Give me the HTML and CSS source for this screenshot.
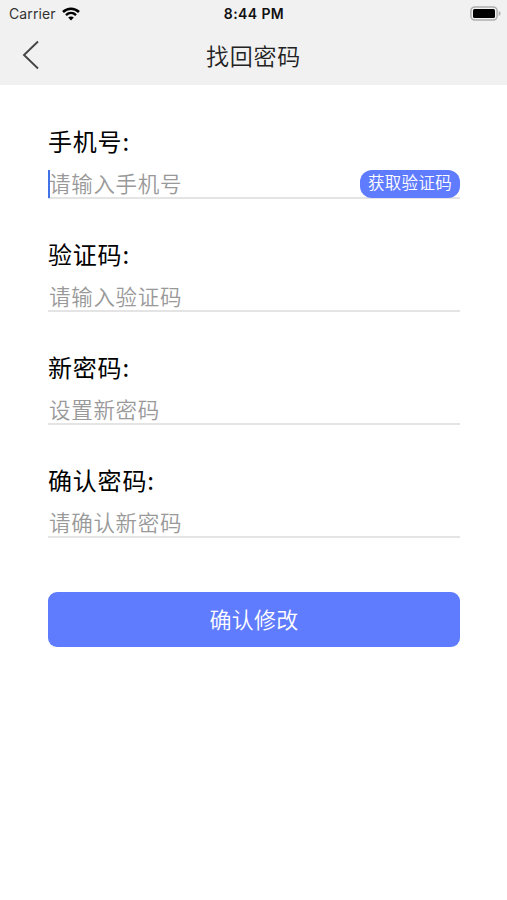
FILE: index.html
```html
<!DOCTYPE html>
<html lang="zh-CN">
<head>
    <meta charset="UTF-8">
    <meta name="viewport" content="width=device-width, initial-scale=1.0">
    <title>找回密码</title>
    <link rel="stylesheet" href="styles.css">
</head>
<body>

    <!-- Header -->
    <header class="header">
        <div class="status-bar">
            <div class="status-left">
                <span class="carrier">Carrier</span>
                <svg class="wifi" width="18" height="14" viewBox="0 0 18 14" fill="none" stroke="#000">
                    <path d="M1 5 C5.6 .7 12.4 .7 17 5" stroke-width="2.6"/>
                    <path d="M4 8.1 C6.9 5.3 11.1 5.3 14 8.1" stroke-width="2.4"/>
                    <path d="M9 13.4 L6.2 10.5 C7.8 9.1 10.2 9.1 11.8 10.5 Z" fill="#000" stroke="none"/>
                </svg>
            </div>
            <span class="time">8:44 PM</span>
            <div class="status-right">
                <svg width="31" height="15" viewBox="0 0 31 15">
                    <rect x=".9" y=".9" width="26.2" height="13.2" rx="4" fill="#f1f1f1" stroke="#adadad" stroke-width="1.5"/>
                    <rect x="3" y="3" width="22" height="9" rx="1.5" fill="#000"/>
                    <path d="M28.7 5 C31.2 6 31.2 9 28.7 10 Z" fill="#adadad"/>
                </svg>
            </div>
        </div>
        <div class="nav-bar">
            <a class="back" href="#" aria-label="返回">
                <svg width="18" height="30" viewBox="0 0 18 30" fill="none" stroke="#444" stroke-width="1.9">
                    <path d="M16 1.5 L2 15 L16 28.5"/>
                </svg>
            </a>
            <h1>找回密码</h1>
            <span></span>
        </div>
    </header>

    <!-- Reset form -->
    <form class="reset-form">
        <div class="field">
            <label for="phone">手机号:</label>
            <div class="input-row">
                <span class="caret"></span>
                <input type="tel" id="phone" placeholder="请输入手机号">
                <button type="button" class="code-button">获取验证码</button>
            </div>
        </div>
        <div class="field">
            <label for="code">验证码:</label>
            <div class="input-row">
                <input type="text" id="code" placeholder="请输入验证码">
            </div>
        </div>
        <div class="field">
            <label for="password">新密码:</label>
            <div class="input-row">
                <input type="password" id="password" placeholder="设置新密码">
            </div>
        </div>
        <div class="field">
            <label for="confirm">确认密码:</label>
            <div class="input-row">
                <input type="password" id="confirm" placeholder="请确认新密码">
            </div>
        </div>
        <button type="submit" class="submit-button">确认修改</button>
    </form>

</body>
</html>
```
FILE: styles.css
```css
* {
    box-sizing: border-box;
}
body {
    margin: 0;
    min-height: 900px;
    background-color: #fff;
    font-family: "Noto Sans CJK SC", sans-serif;
}
.header {
    height: 85px;
    background-color: #f1f1f1;
}
.status-bar {
    display: grid;
    grid-template-columns: 1fr auto 1fr;
    align-items: center;
    height: 27px;
    padding: 0 6px 0 9px;
    font-family: Inter, sans-serif;
    font-size: 14px;
    color: #111;
}
.status-left {
    display: flex;
    align-items: center;
    gap: 6px;
}
.carrier {
    color: #333;
    letter-spacing: 0.1px;
}
.time {
    margin-right: 2px;
    font-weight: 600;
    font-size: 14px;
    letter-spacing: 0.4px;
}
.status-right {
    display: flex;
    justify-content: flex-end;
}
.nav-bar {
    display: grid;
    grid-template-columns: 1fr auto 1fr;
    align-items: center;
    height: 56px;
    padding: 0 22px;
}
.back {
    display: flex;
}
.nav-bar h1 {
    margin: 0;
    font-size: 23px;
    font-weight: 350;
    line-height: 30px;
    letter-spacing: 0.7px;
    color: #222;
}
/* Form */
.reset-form {
    padding: 41px 47px 0 48px;
}
.field {
    height: 113px;
}
.field label {
    display: block;
    height: 44px;
    font-size: 24px;
    line-height: 30px;
    letter-spacing: 0.8px;
    color: #000;
}
.input-row {
    position: relative;
    display: flex;
    height: 29px;
    border-bottom: 2px solid #e4e4e4;
}
.input-row input {
    flex: 1;
    min-width: 0;
    height: 27px;
    padding: 0 0 3px 1px;
    border: none;
    outline: none;
    background: none;
    font-family: inherit;
    font-size: 21.5px;
    font-weight: 350;
    letter-spacing: 0.7px;
}
.input-row input::placeholder {
    color: #999;
}
.caret {
    position: absolute;
    left: 0;
    top: 0;
    width: 2px;
    height: 28px;
    background-color: #4272e8;
}
.code-button {
    width: 100px;
    height: 28px;
    padding: 0 0 3px;
    border: none;
    border-radius: 12px;
    background-color: #5f7cff;
    color: #fff;
    font-family: inherit;
    font-size: 16.5px;
    font-weight: 350;
    line-height: 25px;
    letter-spacing: 0.3px;
}
.submit-button {
    display: block;
    width: 100%;
    height: 55px;
    margin-top: 14px;
    padding: 0 0 4px;
    border: none;
    border-radius: 9px;
    background-color: #5f7cff;
    color: #fff;
    font-family: inherit;
    font-size: 22px;
    font-weight: 350;
    letter-spacing: 0.3px;
}
```
